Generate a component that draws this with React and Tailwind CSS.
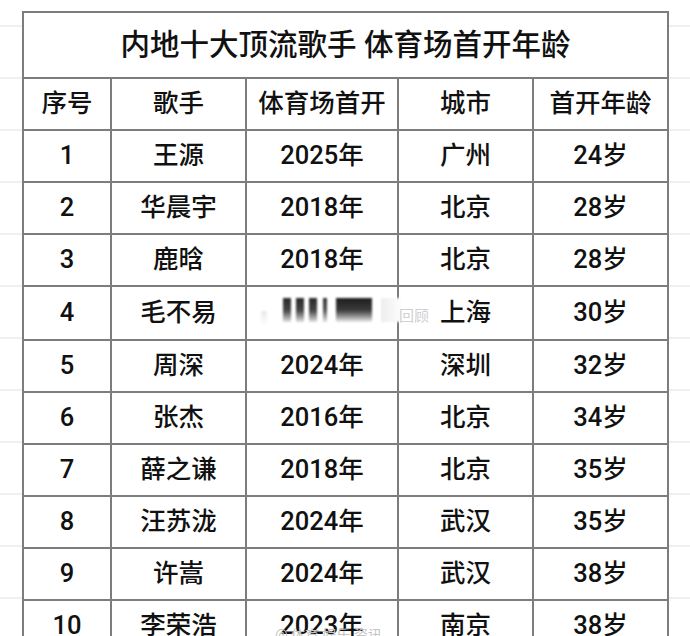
const rows = [
  ["1", "王源", "2025年", "广州", "24岁"],
  ["2", "华晨宇", "2018年", "北京", "28岁"],
  ["3", "鹿晗", "2018年", "北京", "28岁"],
  ["4", "毛不易", "", "上海", "30岁"],
  ["5", "周深", "2024年", "深圳", "32岁"],
  ["6", "张杰", "2016年", "北京", "34岁"],
  ["7", "薛之谦", "2018年", "北京", "35岁"],
  ["8", "汪苏泷", "2024年", "武汉", "35岁"],
  ["9", "许嵩", "2024年", "武汉", "38岁"],
  ["10", "李荣浩", "2023年", "南京", "38岁"],
];

const cell = "border-2 border-[#7d7d7d] text-center align-middle p-0 font-medium leading-none";

// the blurred-out block in row 4
function Censored() {
  return (
    <div className="relative h-[52px] w-full">
      <div className="absolute left-[14px] top-[24px] h-[14px] w-[6px] bg-gradient-to-b from-[#e8e8e8] to-white blur-[1px]" />
      <div className="absolute left-[36px] top-[11px] flex h-[24px] items-stretch gap-[5px] blur-[1px]">
        <div className="w-[8px] bg-gradient-to-b from-[#2a2a2a] via-[#444] to-[#e5e5e5]" />
        <div className="w-[8px] bg-gradient-to-b from-[#2a2a2a] via-[#444] to-[#e5e5e5]" />
        <div className="w-[8px] bg-gradient-to-b from-[#2a2a2a] via-[#444] to-[#e5e5e5]" />
        <div className="ml-[1px] w-[4px] bg-gradient-to-b from-[#333] via-[#555] to-[#e8e8e8]" />
        <div className="ml-[4px] w-[36px] bg-gradient-to-b from-[#1e1e1e] via-[#3a3a3a] to-[#eeeeee]" />
        <div className="ml-[4px] w-[22px] bg-gradient-to-r from-[#ededed] to-white" />
      </div>
    </div>
  );
}

export default function App() {
  return (
    <div className="relative h-[636px] w-[690px] overflow-hidden bg-white bg-[repeating-linear-gradient(180deg,transparent_0px,transparent_25px,#efefef_25px,#efefef_27px,transparent_27px,transparent_52px)] font-['Roboto','Noto_Sans_CJK_SC',sans-serif] text-[#111]">
      <div className="pl-[22px] pt-[11px]">
        <table className="table-fixed border-collapse bg-white">
          <colgroup>
            <col className="w-[88px]" />
            <col className="w-[135px]" />
            <col className="w-[152px]" />
            <col className="w-[135px]" />
            <col className="w-[135px]" />
          </colgroup>
          <tbody>
            <tr className="h-[66px]">
              <td colSpan={5} className={cell + " text-[29.5px]"}>
                <span className="relative top-[1px]">内地十大顶流歌手 体育场首开年龄</span>
              </td>
            </tr>
            <tr className="h-[52px]">
              {["序号", "歌手", "体育场首开", "城市", "首开年龄"].map((h) => (
                <td key={h} className={cell + " text-[25.5px]"}>
                  {h}
                </td>
              ))}
            </tr>
            {rows.map((r) => (
              <tr key={r[0]} className="h-[52px]">
                <td className={cell + " text-[25.5px]"}>{r[0]}</td>
                <td className={cell + " text-[25.5px]"}>{r[1]}</td>
                <td className={cell + " relative text-[25.5px]"}>
                  {r[2] === "" ? <Censored /> : r[2]}
                  {r[2] === "" && (
                    <span className="absolute right-[-32px] top-[22px] text-[15px] font-normal text-[#d0d0d0]">回顾</span>
                  )}
                </td>
                <td className={cell + " text-[25.5px]"}>{r[3]}</td>
                <td className={cell + " text-[25.5px]"}>{r[4]}</td>
              </tr>
            ))}
          </tbody>
        </table>
      </div>
      <div className="absolute left-[275px] top-[628px] text-[14px] leading-none text-[#c4c4c4]">@ 体育 娱乐 资讯</div>
    </div>
  );
}
